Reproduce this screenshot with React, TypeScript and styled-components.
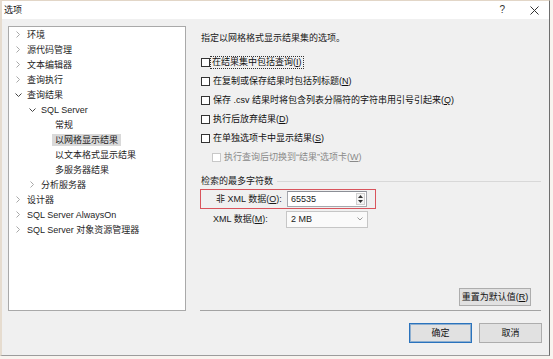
import React, { FC } from "react";
import styled, { createGlobalStyle } from "styled-components";

const GlobalStyle = createGlobalStyle`
  html, body {
    margin: 0;
    padding: 0;
    background: #f8f4ef;
  }
  body {
    font-family: "Liberation Sans", "Noto Sans CJK SC", sans-serif;
    font-size: 9px;
    color: #1a1a1a;
  }
`;

const Window = styled.div`
  box-sizing: border-box;
  width: 550px;
  height: 356px;
  display: flex;
  flex-direction: column;
  border-top: 1px solid #e2d6c7;
  border-left: 2px solid #e6dccf;
  border-right: 1px solid #6e6e6e;
  border-bottom: 1px solid #9c9c9c;
  background: #f0f0f0;
`;

const TitleBar = styled.div`
  height: 18px;
  flex: none;
  display: flex;
  align-items: center;
  padding-left: 2px;
  background: #ffffff;
  line-height: 12px;
`;

const TitleText = styled.span`
  flex: 1;
  color: #111;
`;

const HelpGlyph = styled.span`
  font-size: 10px;
  color: #333;
  margin-right: 25px;
`;

const CloseGlyph = styled.svg`
  margin-right: 10px;
`;

const Body = styled.div`
  flex: 1;
  display: flex;
  flex-direction: column;
  padding: 7px 7px 0 6px;
`;

const Top = styled.div`
  display: flex;
  gap: 14px;
  height: 285px;
`;

const Tree = styled.div`
  box-sizing: border-box;
  width: 178px;
  height: 285px;
  background: #ffffff;
  border: 1px solid #a9a9a9;
`;

const TreeRow = styled.div<{ level: number }>`
  height: 15px;
  display: flex;
  align-items: center;
  padding-left: ${p => 5 + p.level * 14}px;
  white-space: nowrap;
`;

const ChevronSlot = styled.span<{ open?: boolean }>`
  width: 13px;
  flex: none;
  display: flex;
  align-items: center;
  padding-left: ${p => (p.open ? 1 : 2)}px;
  box-sizing: border-box;
`;

const TreeLabel = styled.span<{ selected?: boolean }>`
  line-height: 12px;
  padding: 0 3px;
  margin-left: -3px;
  background: ${p => (p.selected ? "#d9d9d9" : "transparent")};
  color: #1e1e1e;
`;

const Pane = styled.div`
  flex: 1;
  display: flex;
  flex-direction: column;
  height: 285px;
`;

const Description = styled.div`
  margin-top: 6px;
  padding-left: 1px;
  line-height: 12px;
`;

const CheckList = styled.div`
  margin-top: 9px;
  display: flex;
  flex-direction: column;
`;

const CheckRow = styled.div<{ indent?: boolean; disabled?: boolean }>`
  height: 19px;
  display: flex;
  align-items: center;
  padding-left: ${p => (p.indent ? 12 : 1)}px;
  color: ${p => (p.disabled ? "#8a8a8a" : "#111")};
`;

const Box = styled.span<{ disabled?: boolean }>`
  box-sizing: border-box;
  width: 9px;
  height: 9px;
  flex: none;
  background: #fff;
  border: 1px solid ${p => (p.disabled ? "#c8c8c8" : "#333")};
`;

const CheckLabel = styled.span<{ focused?: boolean }>`
  margin-left: ${p => (p.focused ? 1 : 2)}px;
  line-height: 11px;
  padding: 0 1px;
  outline: ${p => (p.focused ? "1px dotted #333" : "none")};
`;

const GroupHeader = styled.div`
  margin-top: 8px;
  display: flex;
  align-items: center;
  padding-left: 1px;
  line-height: 12px;
`;

const GroupLine = styled.span`
  flex: 1;
  height: 1px;
  margin: 1px 1px 0 4px;
  background: #d8d8d8;
`;

const Highlight = styled.div`
  box-sizing: border-box;
  margin-top: 2px;
  width: 176px;
  height: 20px;
  display: flex;
  align-items: center;
  padding-left: 15px;
  border: 1px solid #d9545c;
`;

const FieldRow = styled.div`
  height: 19px;
  display: flex;
  align-items: center;
  padding-left: 13px;
`;

const FieldLabel = styled.span<{ width: number }>`
  width: ${p => p.width}px;
  flex: none;
  line-height: 12px;
`;

const NumberInput = styled.div`
  box-sizing: border-box;
  width: 80px;
  height: 16px;
  display: flex;
  align-items: center;
  padding-left: 3px;
  background: #fff;
  border: 1px solid #a5a8ae;
  border-top-color: #8c8f96;
`;

const InputValue = styled.span`
  flex: 1;
  line-height: 12px;
`;

const Spinner = styled.div`
  box-sizing: border-box;
  width: 9px;
  height: 12px;
  margin-right: 1px;
  display: flex;
  flex-direction: column;
  justify-content: space-around;
  align-items: center;
  border: 1px solid #d0d0d0;
  background: #f4f4f4;
`;

const Select = styled.div`
  box-sizing: border-box;
  width: 82px;
  height: 17px;
  margin-top: 1px;
  display: flex;
  align-items: center;
  padding: 0 4px 0 4px;
  background: #fafafa;
  border: 1px solid #c6c6c6;
`;

const Spacer = styled.div`
  flex: 1;
`;

const ResetRow = styled.div`
  display: flex;
  justify-content: flex-end;
  margin-right: 11px;
`;

const Button = styled.div<{ width: number; height: number; primary?: boolean }>`
  box-sizing: border-box;
  width: ${p => p.width}px;
  height: ${p => p.height}px;
  display: flex;
  align-items: center;
  justify-content: center;
  background: #e1e1e1;
  border: 1px solid ${p => (p.primary ? "#2a73bd" : "#adadad")};
  box-shadow: ${p => (p.primary ? "inset 0 0 0 1px rgba(42, 115, 189, 0.45)" : "none")};
  line-height: 12px;
  color: #111;
`;

const Separator = styled.div`
  margin-top: 4px;
  margin-right: 1px;
  height: 1px;
  background: #a3a3a3;
`;

const ButtonRow = styled.div`
  margin-top: 12px;
  display: flex;
  justify-content: flex-end;
  gap: 7px;
`;

const Collapsed: FC = () => (
  <svg width="4" height="7" viewBox="0 0 4 7">
    <polyline points="0.5,0.5 3.5,3.5 0.5,6.5" fill="none" stroke="#a8a8a8" strokeWidth="1" />
  </svg>
);

const Expanded: FC = () => (
  <svg width="7" height="4" viewBox="0 0 7 4">
    <polyline points="0.5,0.5 3.5,3.5 6.5,0.5" fill="none" stroke="#444" strokeWidth="1" />
  </svg>
);

type Node = {
  label: string;
  level: number;
  state?: "open" | "closed";
  selected?: boolean;
};

const nodes: Node[] = [
  { label: "环境", level: 0, state: "closed" },
  { label: "源代码管理", level: 0, state: "closed" },
  { label: "文本编辑器", level: 0, state: "closed" },
  { label: "查询执行", level: 0, state: "closed" },
  { label: "查询结果", level: 0, state: "open" },
  { label: "SQL Server", level: 1, state: "open" },
  { label: "常规", level: 2 },
  { label: "以网格显示结果", level: 2, selected: true },
  { label: "以文本格式显示结果", level: 2 },
  { label: "多服务器结果", level: 2 },
  { label: "分析服务器", level: 1, state: "closed" },
  { label: "设计器", level: 0, state: "closed" },
  { label: "SQL Server AlwaysOn", level: 0, state: "closed" },
  { label: "SQL Server 对象资源管理器", level: 0, state: "closed" }
];

type Check = {
  text: string;
  key: string;
  focused?: boolean;
  disabled?: boolean;
};

const checks: Check[] = [
  { text: "在结果集中包括查询", key: "I", focused: true },
  { text: "在复制或保存结果时包括列标题", key: "N" },
  { text: "保存 .csv 结果时将包含列表分隔符的字符串用引号引起来", key: "Q" },
  { text: "执行后放弃结果", key: "D" },
  { text: "在单独选项卡中显示结果", key: "S" },
  { text: "执行查询后切换到“结果”选项卡", key: "W", disabled: true }
];

const App: FC = () => (
  <>
    <GlobalStyle />
    <Window>
      <TitleBar>
        <TitleText>选项</TitleText>
        <HelpGlyph>?</HelpGlyph>
        <CloseGlyph width="9" height="9" viewBox="0 0 9 9">
          <path d="M0.5 0.5 L8.5 8.5 M8.5 0.5 L0.5 8.5" stroke="#333" strokeWidth="1" />
        </CloseGlyph>
      </TitleBar>
      <Body>
        <Top>
          <Tree>
            {nodes.map(n => (
              <TreeRow key={n.label + n.level} level={n.level}>
                <ChevronSlot open={n.state === "open"}>
                  {n.state === "open" && <Expanded />}
                  {n.state === "closed" && <Collapsed />}
                </ChevronSlot>
                <TreeLabel selected={n.selected}>{n.label}</TreeLabel>
              </TreeRow>
            ))}
          </Tree>
          <Pane>
            <Description>指定以网格格式显示结果集的选项。</Description>
            <CheckList>
              {checks.map(c => (
                <CheckRow key={c.key} indent={c.disabled} disabled={c.disabled}>
                  <Box disabled={c.disabled} />
                  <CheckLabel focused={c.focused}>
                    {c.text}(<u>{c.key}</u>)
                  </CheckLabel>
                </CheckRow>
              ))}
            </CheckList>
            <GroupHeader>
              检索的最多字符数
              <GroupLine />
            </GroupHeader>
            <Highlight>
              <FieldLabel width={71}>
                非 XML 数据(<u>O</u>):
              </FieldLabel>
              <NumberInput>
                <InputValue>65535</InputValue>
                <Spinner>
                  <svg width="5" height="3" viewBox="0 0 5 3">
                    <polygon points="0,3 2.5,0 5,3" fill="#333" />
                  </svg>
                  <svg width="5" height="3" viewBox="0 0 5 3">
                    <polygon points="0,0 2.5,3 5,0" fill="#333" />
                  </svg>
                </Spinner>
              </NumberInput>
            </Highlight>
            <FieldRow>
              <FieldLabel width={73}>
                XML 数据(<u>M</u>):
              </FieldLabel>
              <Select>
                <InputValue>2 MB</InputValue>
                <svg width="6" height="4" viewBox="0 0 6 4">
                  <polyline points="0.5,0.5 3,3 5.5,0.5" fill="none" stroke="#9a9a9a" strokeWidth="1" />
                </svg>
              </Select>
            </FieldRow>
            <Spacer />
            <ResetRow>
              <Button width={72} height={18}>
                重置为默认值(<u>R</u>)
              </Button>
            </ResetRow>
            <Separator />
          </Pane>
        </Top>
        <ButtonRow>
          <Button width={63} height={20} primary>
            确定
          </Button>
          <Button width={63} height={20}>
            取消
          </Button>
        </ButtonRow>
      </Body>
    </Window>
  </>
);

export default App;
